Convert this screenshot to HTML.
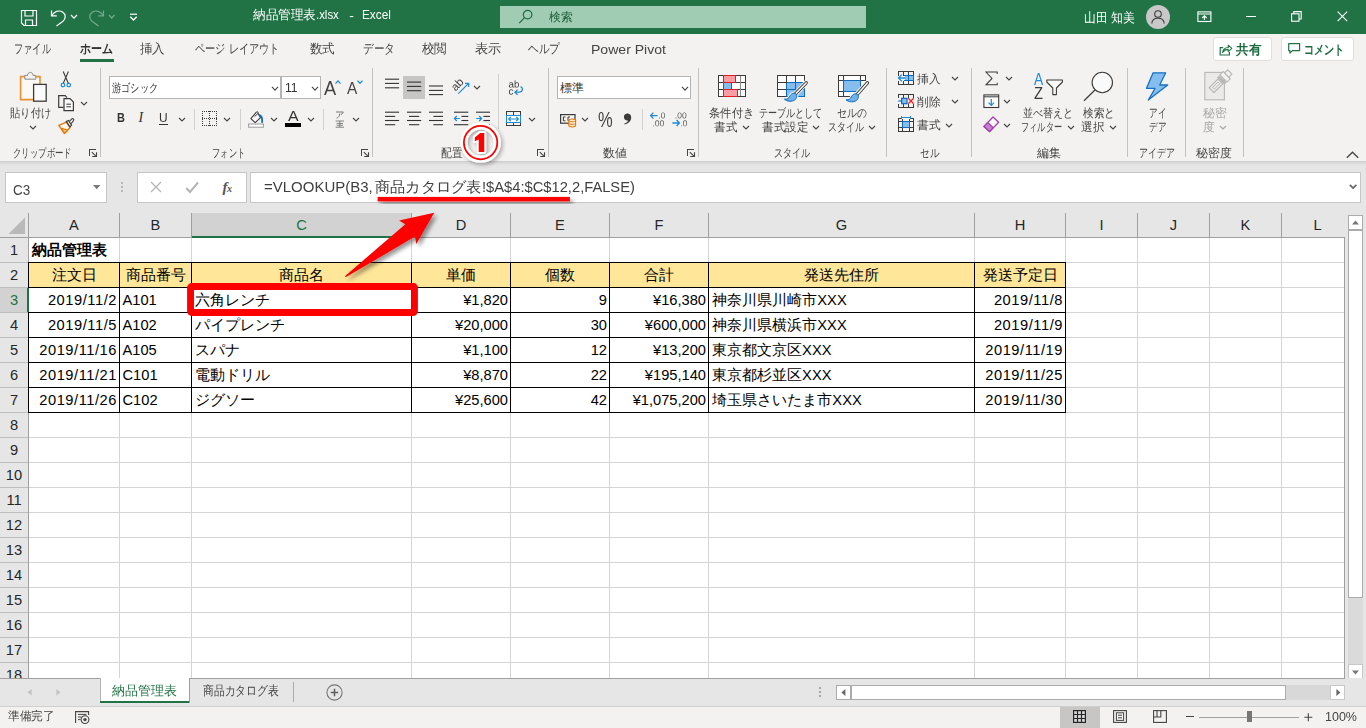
<!DOCTYPE html>
<html lang="ja"><head><meta charset="utf-8"><title>納品管理表.xlsx - Excel</title>
<style>
html,body{margin:0;padding:0;}
body{width:1366px;height:728px;overflow:hidden;position:relative;background:#e6e6e6;font-family:"Liberation Sans",sans-serif;}
div,span.t,svg{position:absolute;box-sizing:border-box;}
span.t{white-space:nowrap;display:block;}
svg{overflow:visible;}
.c{font-size:14.67px;line-height:24px;height:24px;color:#000;white-space:nowrap;position:absolute;overflow:hidden;}
</style></head><body>

<div style="left:0px;top:0px;width:1366px;height:34px;background:#217346;"></div>
<svg style="left:20px;top:9px;" width="18" height="18" viewBox="0 0 18 18"><path d="M1.5 1.5 H16.5 V16.5 H4 L1.5 14 Z" fill="none" stroke="#fff" stroke-width="1.2"/><path d="M5 1.5 V7 H13 V1.5 M5.5 16.5 V11 H12.5 V16.5" fill="none" stroke="#fff" stroke-width="1.2"/></svg>
<svg style="left:50px;top:9px;" width="17" height="18" viewBox="0 0 17 18"><path d="M1.5 1.5 V6.8 H6.8" fill="none" stroke="#fff" stroke-width="1.2"/><path d="M1.8 6.5 C4 2.5 9 0.8 12.5 3 C16 5.2 16 9.5 13 12.2 L6.5 17" fill="none" stroke="#fff" stroke-width="1.2"/></svg>
<svg style="left:69.6px;top:13.8px;" width="8" height="5.2" viewBox="0 0 8 5.2"><path d="M1 1 L4.0 4.2 L7 1" fill="none" stroke="#fff" stroke-width="1.2"/></svg>
<svg style="left:88px;top:9px;opacity:.38;" width="17" height="18" viewBox="0 0 17 18"><path d="M15.5 1.5 V6.8 H10.2" fill="none" stroke="#fff" stroke-width="1.2"/><path d="M15.2 6.5 C13 2.5 8 0.8 4.5 3 C1 5.2 1 9.5 4 12.2 L10.5 17" fill="none" stroke="#fff" stroke-width="1.2"/></svg>
<svg style="left:108px;top:13.8px;" width="7.6" height="5" viewBox="0 0 7.6 5"><path d="M1 1 L3.8 4 L6.6 1" fill="none" stroke="rgba(255,255,255,.38)" stroke-width="1.2"/></svg>
<svg style="left:129px;top:13px;" width="9" height="8" viewBox="0 0 9 8"><path d="M1 1.2 H8" stroke="#fff" stroke-width="1.2"/><path d="M1.3 3.8 L4.5 7 L7.7 3.8" fill="none" stroke="#fff" stroke-width="1.3"/></svg>
<span class="t" style="font-size:13.33px;color:#fff;line-height:16px;height:16px;top:7.20px;left:252.50px;transform-origin:0 50%;transform:scaleX(0.9677);">納品管理表</span>
<span class="t" style="font-size:12.8px;color:#fff;line-height:16px;height:16px;top:7.40px;left:316.40px;transform-origin:0 50%;transform:scaleX(0.8903);">.xlsx</span>
<span class="t" style="font-size:13.33px;color:#fff;line-height:16px;height:16px;top:7.60px;left:349.20px;">-</span>
<span class="t" style="font-size:12.8px;color:#fff;line-height:16px;height:16px;top:7.40px;left:361.50px;transform-origin:0 50%;transform:scaleX(0.9202);">Excel</span>
<div style="left:500px;top:6px;width:366px;height:22px;background:#a0ccb3;"></div>
<svg style="left:518px;top:9px;" width="16" height="16" viewBox="0 0 16 16"><circle cx="9.6" cy="5.6" r="4.3" fill="none" stroke="#1e6b40" stroke-width="1.2"/><path d="M6.6 8.7 L1.2 14.2" stroke="#1e6b40" stroke-width="1.2"/></svg>
<span class="t" style="font-size:12px;color:#1b5e38;line-height:16px;height:16px;top:9.00px;left:549.00px;transform-origin:0 50%;transform:scaleX(0.9792);">検索</span>
<span class="t" style="font-size:13.33px;color:#fff;line-height:16px;height:16px;top:9.90px;left:1083.80px;transform-origin:0 50%;transform:scaleX(0.9120);">山田 知美</span>
<svg style="left:1145px;top:4px;" width="26" height="26" viewBox="0 0 26 26"><circle cx="13" cy="13" r="12" fill="#c8c8c8"/><circle cx="13" cy="10" r="3.3" fill="none" stroke="#3b3b3b" stroke-width="1.1"/><path d="M6.8 19.5 C7 15 10 14.2 13 14.2 C16 14.2 19 15 19.2 19.5" fill="none" stroke="#3b3b3b" stroke-width="1.1"/></svg>
<svg style="left:1197px;top:10.5px;" width="15" height="12" viewBox="0 0 15 12"><rect x="0.9" y="0.9" width="13" height="9.6" fill="none" stroke="#fff" stroke-width="1.1"/><path d="M0.9 3 H13.9" stroke="#fff" stroke-width="1"/><path d="M7.4 9 V4.8 M5.1 7 L7.4 4.7 L9.7 7" fill="none" stroke="#fff" stroke-width="1.1"/></svg>
<div style="left:1246px;top:16px;width:10px;height:1px;background:#fff;height:1.2px;"></div>
<svg style="left:1291px;top:11px;" width="11" height="11" viewBox="0 0 11 11"><rect x="0.6" y="2.8" width="7.4" height="7.4" fill="none" stroke="#fff" stroke-width="1.1"/><path d="M2.8 2.8 V0.6 H10.2 V8 H8" fill="none" stroke="#fff" stroke-width="1.1"/></svg>
<svg style="left:1337px;top:11px;" width="11" height="11" viewBox="0 0 11 11"><path d="M0.6 0.6 L10.2 10.2 M10.2 0.6 L0.6 10.2" stroke="#fff" stroke-width="1.1"/></svg>
<div style="left:0px;top:34px;width:1366px;height:128px;background:#f3f2f1;"></div>
<span class="t" style="font-size:13.33px;color:#444;line-height:16px;height:16px;top:41.00px;left:13.80px;transform-origin:0 50%;transform:scaleX(0.7115);">ファイル</span>
<span class="t" style="font-size:13.33px;color:#333;line-height:16px;height:16px;top:41.00px;font-weight:bold;left:80.00px;transform-origin:0 50%;transform:scaleX(0.8462);">ホーム</span>
<div style="left:80px;top:59px;width:34px;height:3px;background:#217346;"></div>
<span class="t" style="font-size:13.33px;color:#444;line-height:16px;height:16px;top:41.00px;left:140.00px;transform-origin:0 50%;transform:scaleX(0.9615);">挿入</span>
<span class="t" style="font-size:13.33px;color:#444;line-height:16px;height:16px;top:41.00px;left:195.00px;transform-origin:0 50%;transform:scaleX(0.7846);">ページ レイアウト</span>
<span class="t" style="font-size:13.33px;color:#444;line-height:16px;height:16px;top:41.00px;left:310.00px;transform-origin:0 50%;transform:scaleX(0.9615);">数式</span>
<span class="t" style="font-size:13.33px;color:#444;line-height:16px;height:16px;top:41.00px;left:362.50px;transform-origin:0 50%;transform:scaleX(0.8205);">データ</span>
<span class="t" style="font-size:13.33px;color:#444;line-height:16px;height:16px;top:41.00px;left:422.00px;transform-origin:0 50%;transform:scaleX(0.9615);">校閲</span>
<span class="t" style="font-size:13.33px;color:#444;line-height:16px;height:16px;top:41.00px;left:474.50px;transform-origin:0 50%;transform:scaleX(1.0115);">表示</span>
<span class="t" style="font-size:13.33px;color:#444;line-height:16px;height:16px;top:41.00px;left:527.50px;transform-origin:0 50%;transform:scaleX(0.8205);">ヘルプ</span>
<span class="t" style="font-size:13.33px;color:#444;line-height:16px;height:16px;top:41.60px;left:590.80px;transform-origin:0 50%;transform:scaleX(1.0545);">Power Pivot</span>
<div style="left:1212.5px;top:37px;width:59px;height:23.5px;background:#fff;border:1px solid #e1dfdd;border-radius:3px;"></div>
<svg style="left:1219px;top:43px;" width="14" height="13" viewBox="0 0 14 13"><path d="M4.2 4.6 H1.2 V12 H10.4 V9" fill="none" stroke="#217346" stroke-width="1.2"/><path d="M3.6 9.4 C4 6.4 6 4.6 9.2 4.5 V2.2 L12.8 5.4 L9.2 8.6 V6.4 C6.8 6.4 5 7.2 3.6 9.4 Z" fill="none" stroke="#217346" stroke-width="1.1" stroke-linejoin="round"/></svg>
<span class="t" style="font-size:13.33px;color:#1e6b40;line-height:16px;height:16px;top:41.80px;font-weight:bold;left:1236.20px;transform-origin:0 50%;transform:scaleX(0.9654);">共有</span>
<div style="left:1280.5px;top:37px;width:73px;height:23.5px;background:#fff;border:1px solid #e1dfdd;border-radius:3px;"></div>
<svg style="left:1288px;top:43px;" width="13" height="12" viewBox="0 0 13 12"><path d="M0.7 0.7 H11.6 V7.6 H4.4 L1.9 10.1 V7.6 H0.7 Z" fill="none" stroke="#217346" stroke-width="1.2" stroke-linejoin="round"/></svg>
<span class="t" style="font-size:13.33px;color:#1e6b40;line-height:16px;height:16px;top:41.80px;font-weight:bold;left:1303.50px;transform-origin:0 50%;transform:scaleX(0.7788);">コメント</span>
<div style="left:0px;top:161px;width:1366px;height:5px;background:linear-gradient(#cecece,#d9d9d9 35%,#e2e2e2 70%,#e6e6e6);"></div>
<div style="left:100.1px;top:68px;width:1px;height:88.5px;background:#c4c2c0;"></div>
<div style="left:372.2px;top:68px;width:1px;height:88.5px;background:#c4c2c0;"></div>
<div style="left:547.9px;top:68px;width:1px;height:88.5px;background:#c4c2c0;"></div>
<div style="left:698.1px;top:68px;width:1px;height:88.5px;background:#c4c2c0;"></div>
<div style="left:885.9px;top:68px;width:1px;height:88.5px;background:#c4c2c0;"></div>
<div style="left:970.9px;top:68px;width:1px;height:88.5px;background:#c4c2c0;"></div>
<div style="left:1126.9px;top:68px;width:1px;height:88.5px;background:#c4c2c0;"></div>
<div style="left:1185.1px;top:68px;width:1px;height:88.5px;background:#c4c2c0;"></div>
<div style="left:1242.9px;top:68px;width:1px;height:88.5px;background:#c4c2c0;"></div>
<div style="left:194.1px;top:109px;width:1px;height:21px;background:#d2d0ce;"></div>
<div style="left:240.0px;top:109px;width:1px;height:21px;background:#d2d0ce;"></div>
<div style="left:323.2px;top:109px;width:1px;height:21px;background:#d2d0ce;"></div>
<div style="left:642.1px;top:109px;width:1px;height:21px;background:#d2d0ce;"></div>
<div style="left:498.1px;top:74px;width:1px;height:55px;background:#d2d0ce;"></div>
<svg style="left:19px;top:71px;" width="29" height="32" viewBox="0 0 29 32"><rect x="1.6" y="5.6" width="19.4" height="23" fill="#fcf9f4"/><path d="M6 5.6 H1.6 V28.6 H14" fill="none" stroke="#e8912d" stroke-width="1.6"/><path d="M16.6 5.6 H21 V13" fill="none" stroke="#e8912d" stroke-width="1.6"/><path d="M5.8 8.2 V4.4 H8.6 C8.6 0.4 14 0.4 14 4.4 H16.8 V8.2 Z" fill="#f3f2f1" stroke="#8a8a8a" stroke-width="1"/><rect x="14.6" y="13.4" width="12.6" height="16.8" fill="#fafafa" stroke="#3b3b3b" stroke-width="1.3"/></svg>
<span class="t" style="font-size:12px;color:#444;line-height:16px;height:16px;top:104.60px;left:10.30px;transform-origin:0 50%;transform:scaleX(0.8583);">貼り付け</span>
<svg style="left:28.7px;top:125px;" width="8" height="5" viewBox="0 0 8 5"><path d="M1 1 L4.0 4 L7 1" fill="none" stroke="#444" stroke-width="1.1"/></svg>
<svg style="left:60px;top:71px;" width="12" height="17" viewBox="0 0 12 17"><path d="M3.2 0.5 L8.3 12.2 M8.4 0.5 L3.3 12.2" fill="none" stroke="#3b3b3b" stroke-width="1.1"/><rect x="1.3" y="12.3" width="3.3" height="3.4" rx="1.2" fill="none" stroke="#1e8ad6" stroke-width="1.2"/><rect x="7.1" y="12.3" width="3.3" height="3.4" rx="1.2" fill="none" stroke="#1e8ad6" stroke-width="1.2"/></svg>
<svg style="left:58px;top:95px;" width="17" height="17" viewBox="0 0 17 17"><path d="M5.4 12.4 H0.7 V0.7 H7.2 L9 2.6" fill="none" stroke="#3b3b3b" stroke-width="1.2"/><path d="M6 3.6 H12 L15.4 7 V15.6 H6 Z" fill="#fafafa" stroke="#3b3b3b" stroke-width="1.2"/><path d="M8.4 9.2 H13 M8.4 11.8 H13" stroke="#3b3b3b" stroke-width="1"/></svg>
<svg style="left:79.5px;top:101px;" width="8" height="5" viewBox="0 0 8 5"><path d="M1 1 L4.0 4 L7 1" fill="none" stroke="#444" stroke-width="1.1"/></svg>
<svg style="left:58px;top:118px;" width="17" height="17" viewBox="0 0 17 17"><path d="M0.8 7.4 L8.6 4.2 L12.2 9.6 L6.4 15.4 Z" fill="#fdf6ec" stroke="#e07a10" stroke-width="1.4" stroke-linejoin="round"/><path d="M3.4 10.4 L9.8 12 L6.4 15.4 Z" fill="#f7c46c" stroke="#e07a10" stroke-width="1.1" stroke-linejoin="round"/><path d="M8.2 3.4 L10.4 2.4 L13.6 7.2 L11.8 8.8 Z" fill="none" stroke="#3b3b3b" stroke-width="1.1"/><path d="M11.4 3.4 L13.8 0.9 C14.8 0 16.4 1.4 15.6 2.5 L13.2 5.6" fill="none" stroke="#3b3b3b" stroke-width="1.1"/></svg>
<span class="t" style="font-size:12px;color:#444;line-height:16px;height:16px;top:145.00px;left:12.50px;transform-origin:0 50%;transform:scaleX(0.6988);">クリップボード</span>
<svg style="left:89px;top:149px;" width="9" height="9" viewBox="0 0 9 9"><path d="M0.5 7 V0.5 H7" fill="none" stroke="#444" stroke-width="1" shape-rendering="crispEdges"/><path d="M2.8 3.1 L7.2 7.3" fill="none" stroke="#444" stroke-width="1.1"/><path d="M7.5 3.2 V7.5 H3.2" fill="none" stroke="#444" stroke-width="1.1"/></svg>
<div style="left:109px;top:76px;width:172px;height:23px;background:#fff;border:1px solid #b4b4b4;"></div>
<div style="left:281px;top:76px;width:40px;height:23px;background:#fff;border:1px solid #b4b4b4;"></div>
<span class="t" style="font-size:12px;color:#333;line-height:16px;height:16px;top:79.60px;left:111.90px;transform-origin:0 50%;transform:scaleX(0.7683);">游ゴシック</span>
<svg style="left:270.6px;top:85.9px;" width="8" height="5.2" viewBox="0 0 8 5.2"><path d="M1 1 L4.0 4.2 L7 1" fill="none" stroke="#444" stroke-width="1.1"/></svg>
<span class="t" style="font-size:12px;color:#333;line-height:16px;height:16px;top:79.80px;left:284.70px;transform-origin:0 50%;transform:scaleX(1.0105);">11</span>
<svg style="left:310.5px;top:85.9px;" width="8" height="5.2" viewBox="0 0 8 5.2"><path d="M1 1 L4.0 4.2 L7 1" fill="none" stroke="#444" stroke-width="1.1"/></svg>
<span class="t" style="font-size:20px;color:#444;line-height:22px;height:22px;top:77.00px;left:324.00px;transform-origin:0 50%;transform:scaleX(0.9143);">A</span>
<svg style="left:334.6px;top:79.6px;" width="6" height="4" viewBox="0 0 6 4"><path d="M0.5 3.6 L3 0.9 L5.5 3.6" fill="none" stroke="#1e8ad6" stroke-width="1.3"/></svg>
<span class="t" style="font-size:16.6px;color:#444;line-height:20px;height:20px;top:79.20px;left:347.00px;transform-origin:0 50%;transform:scaleX(0.9298);">A</span>
<svg style="left:356.8px;top:79.6px;" width="6" height="4" viewBox="0 0 6 4"><path d="M0.5 0.6 L3 3.3 L5.5 0.6" fill="none" stroke="#1e8ad6" stroke-width="1.3"/></svg>
<span class="t" style="font-size:13.4px;color:#333;line-height:16px;height:16px;top:110.40px;font-weight:bold;left:116.50px;transform-origin:0 50%;transform:scaleX(0.8168);">B</span>
<span class="t" style="left:138.6px;top:110.2px;font-family:'Liberation Serif',serif;font-style:italic;font-size:14px;line-height:16px;color:#333;">I</span>
<span class="t" style="font-size:13px;color:#333;line-height:16px;height:16px;top:109.60px;left:159.40px;transform-origin:0 50%;transform:scaleX(0.9158);">U</span>
<div style="left:159.2px;top:123.9px;width:9px;height:1.1px;background:#333;"></div>
<svg style="left:177.5px;top:116.8px;" width="8" height="5" viewBox="0 0 8 5"><path d="M1 1 L4.0 4 L7 1" fill="none" stroke="#444" stroke-width="1.1"/></svg>
<svg style="left:202px;top:111px;" width="16" height="16" viewBox="0 0 16 16"><g shape-rendering="crispEdges"><path d="M0.5 0 V15 M7.5 0 V15 M14.5 0 V15 M0 0.5 H15 M0 7.5 H15 M0 14.5 H15" fill="none" stroke="#3b3b3b" stroke-width="1" stroke-dasharray="1 1"/></g></svg>
<svg style="left:223.4px;top:116.8px;" width="8" height="5" viewBox="0 0 8 5"><path d="M1 1 L4.0 4 L7 1" fill="none" stroke="#444" stroke-width="1.1"/></svg>
<svg style="left:248px;top:110.5px;" width="16" height="17" viewBox="0 0 16 17"><path d="M8.6 0.9 L2.9 7.6 L7.2 11.6 L12.5 6.6 L10 2.4" fill="#fafafa" stroke="#3b3b3b" stroke-width="1.1" stroke-linejoin="round"/><path d="M8.6 0.9 C9.6 0.3 10.6 1.2 10 2.4 L6.6 5.6" fill="none" stroke="#3b3b3b" stroke-width="1"/><path d="M11.6 4.2 C13.6 4.8 14.4 7 14.1 11" fill="none" stroke="#1470c6" stroke-width="1.9" stroke-linecap="round"/><rect x="0.6" y="13" width="14.8" height="3.2" fill="#fff" stroke="#9a9a9a" stroke-width="1"/></svg>
<svg style="left:269.6px;top:116.8px;" width="8" height="5" viewBox="0 0 8 5"><path d="M1 1 L4.0 4 L7 1" fill="none" stroke="#444" stroke-width="1.1"/></svg>
<span class="t" style="font-size:14.6px;color:#333;line-height:16px;height:16px;top:108.20px;left:288.00px;transform-origin:0 50%;transform:scaleX(1.0889);">A</span>
<div style="left:285px;top:123px;width:16px;height:4px;background:#000;"></div>
<svg style="left:306.6px;top:116.8px;" width="8" height="5" viewBox="0 0 8 5"><path d="M1 1 L4.0 4 L7 1" fill="none" stroke="#444" stroke-width="1.1"/></svg>
<svg style="left:334.5px;top:110.5px;" width="10" height="17" viewBox="0 0 10 17"><path d="M1 1 H8.4 L6 4 M4.6 2.6 C4.6 5 3.6 6.4 1.6 7.2" fill="none" stroke="#777" stroke-width="1"/><path d="M0.6 10 H9 M1.6 12.4 H8 M1.6 14.2 H8 M0.6 16.2 H9 M4.8 10 V16.2" fill="none" stroke="#777" stroke-width="0.9"/></svg>
<svg style="left:352.4px;top:116.8px;" width="8" height="5" viewBox="0 0 8 5"><path d="M1 1 L4.0 4 L7 1" fill="none" stroke="#444" stroke-width="1.1"/></svg>
<span class="t" style="font-size:12px;color:#444;line-height:16px;height:16px;top:145.00px;left:212.00px;transform-origin:0 50%;transform:scaleX(0.6875);">フォント</span>
<svg style="left:361px;top:149px;" width="9" height="9" viewBox="0 0 9 9"><path d="M0.5 7 V0.5 H7" fill="none" stroke="#444" stroke-width="1" shape-rendering="crispEdges"/><path d="M2.8 3.1 L7.2 7.3" fill="none" stroke="#444" stroke-width="1.1"/><path d="M7.5 3.2 V7.5 H3.2" fill="none" stroke="#444" stroke-width="1.1"/></svg>
<div style="left:403px;top:76px;width:22px;height:23px;background:#c8c6c4;"></div>
<svg style="left:384.9px;top:76px;" width="15" height="23" viewBox="0 0 15 23"><path d="M0 3.2 H14.1" stroke="#333" stroke-width="1.1"/><path d="M0 7.4 H14.1" stroke="#333" stroke-width="1.1"/><path d="M0 11.8 H14.1" stroke="#333" stroke-width="1.1"/></svg>
<svg style="left:407px;top:76px;" width="15" height="23" viewBox="0 0 15 23"><path d="M0 6.1 H14.2" stroke="#333" stroke-width="1.1"/><path d="M0 10.4 H14.2" stroke="#333" stroke-width="1.1"/><path d="M0 14.7 H14.2" stroke="#333" stroke-width="1.1"/></svg>
<svg style="left:429px;top:76px;" width="15" height="23" viewBox="0 0 15 23"><path d="M0 10 H14" stroke="#333" stroke-width="1.1"/><path d="M0 14.4 H14" stroke="#333" stroke-width="1.1"/><path d="M0 18.6 H14" stroke="#333" stroke-width="1.1"/></svg>
<svg style="left:452px;top:78px;" width="18" height="17" viewBox="0 0 18 17"><path transform="translate(3.7 13.7) rotate(-47) scale(0.00557 -0.00557)" d="M414 -20Q251 -20 169 66Q87 152 87 302Q87 470 198 560Q308 650 554 656L797 660V719Q797 851 741 908Q685 965 565 965Q444 965 389 924Q334 883 323 793L135 810Q181 1102 569 1102Q773 1102 876 1008Q979 915 979 738V272Q979 192 1000 152Q1021 111 1080 111Q1106 111 1139 118V6Q1071 -10 1000 -10Q900 -10 854 42Q809 95 803 207H797Q728 83 636 32Q545 -20 414 -20ZM455 115Q554 115 631 160Q708 205 752 284Q797 362 797 445V534L600 530Q473 528 408 504Q342 480 307 430Q272 380 272 299Q272 211 320 163Q367 115 455 115ZM2192 546Q2192 -20 1794 -20Q1671 -20 1590 24Q1508 69 1457 168H1455Q1455 137 1451 74Q1447 10 1445 0H1271Q1277 54 1277 223V1484H1457V1061Q1457 996 1453 908H1457Q1507 1012 1590 1057Q1672 1102 1794 1102Q1999 1102 2096 964Q2192 826 2192 546ZM2003 540Q2003 767 1943 865Q1883 963 1748 963Q1596 963 1526 859Q1457 755 1457 529Q1457 316 1525 214Q1593 113 1746 113Q1882 113 1942 214Q2003 314 2003 540Z" fill="#3b3b3b"/><path d="M6.3 15.6 L16.6 5.4 M13 5.3 H16.7 V9" fill="none" stroke="#1e8ad6" stroke-width="1.25"/></svg>
<svg style="left:472.6px;top:84.9px;" width="8" height="5" viewBox="0 0 8 5"><path d="M1 1 L4.0 4 L7 1" fill="none" stroke="#444" stroke-width="1.1"/></svg>
<svg style="left:384.9px;top:111px;" width="15" height="15" viewBox="0 0 15 15"><path d="M0 1.2 H14.1" stroke="#333" stroke-width="1.1"/><path d="M0 5.4 H10.2" stroke="#333" stroke-width="1.1"/><path d="M0 9.5 H14.1" stroke="#333" stroke-width="1.1"/><path d="M0 13.7 H10.2" stroke="#333" stroke-width="1.1"/></svg>
<svg style="left:407px;top:111px;" width="15" height="15" viewBox="0 0 15 15"><path d="M0 1.2 H14.2" stroke="#333" stroke-width="1.1"/><path d="M2 5.4 H12.2" stroke="#333" stroke-width="1.1"/><path d="M0 9.5 H14.2" stroke="#333" stroke-width="1.1"/><path d="M2 13.7 H12.2" stroke="#333" stroke-width="1.1"/></svg>
<svg style="left:429px;top:111px;" width="15" height="15" viewBox="0 0 15 15"><path d="M0 1.2 H14" stroke="#333" stroke-width="1.1"/><path d="M4.4 5.4 H14" stroke="#333" stroke-width="1.1"/><path d="M0 9.5 H14" stroke="#333" stroke-width="1.1"/><path d="M4.4 13.7 H14" stroke="#333" stroke-width="1.1"/></svg>
<svg style="left:454px;top:111px;" width="15" height="15" viewBox="0 0 15 15"><path d="M0 1.2 H14.3" stroke="#333" stroke-width="1.1"/><path d="M7.4 5.4 H14.3" stroke="#333" stroke-width="1.1"/><path d="M7.4 9.5 H14.3" stroke="#333" stroke-width="1.1"/><path d="M0 13.7 H14.3" stroke="#333" stroke-width="1.1"/><path d="M0.4 7.5 H5.8 M2.8 5 L0.4 7.5 L2.8 10" fill="none" stroke="#1e8ad6" stroke-width="1.2"/></svg>
<svg style="left:476px;top:111px;" width="15" height="15" viewBox="0 0 15 15"><path d="M0 1.2 H14" stroke="#333" stroke-width="1.1"/><path d="M7.4 5.4 H14" stroke="#333" stroke-width="1.1"/><path d="M7.4 9.5 H14" stroke="#333" stroke-width="1.1"/><path d="M0 13.7 H14" stroke="#333" stroke-width="1.1"/><path d="M0.2 7.5 H5.6 M3.2 5 L5.6 7.5 L3.2 10" fill="none" stroke="#1e8ad6" stroke-width="1.2"/></svg>
<svg style="left:507.5px;top:79.5px;" width="16" height="16" viewBox="0 0 16 16"><path transform="translate(0.5 7.5) scale(0.00479 -0.00479)" d="M414 -20Q251 -20 169 66Q87 152 87 302Q87 470 198 560Q308 650 554 656L797 660V719Q797 851 741 908Q685 965 565 965Q444 965 389 924Q334 883 323 793L135 810Q181 1102 569 1102Q773 1102 876 1008Q979 915 979 738V272Q979 192 1000 152Q1021 111 1080 111Q1106 111 1139 118V6Q1071 -10 1000 -10Q900 -10 854 42Q809 95 803 207H797Q728 83 636 32Q545 -20 414 -20ZM455 115Q554 115 631 160Q708 205 752 284Q797 362 797 445V534L600 530Q473 528 408 504Q342 480 307 430Q272 380 272 299Q272 211 320 163Q367 115 455 115ZM2192 546Q2192 -20 1794 -20Q1671 -20 1590 24Q1508 69 1457 168H1455Q1455 137 1451 74Q1447 10 1445 0H1271Q1277 54 1277 223V1484H1457V1061Q1457 996 1453 908H1457Q1507 1012 1590 1057Q1672 1102 1794 1102Q1999 1102 2096 964Q2192 826 2192 546ZM2003 540Q2003 767 1943 865Q1883 963 1748 963Q1596 963 1526 859Q1457 755 1457 529Q1457 316 1525 214Q1593 113 1746 113Q1882 113 1942 214Q2003 314 2003 540Z" fill="#3b3b3b"/><path transform="translate(0.5 14.6) scale(0.00479 -0.00479)" d="M275 546Q275 330 343 226Q411 122 548 122Q644 122 708 174Q773 226 788 334L970 322Q949 166 837 73Q725 -20 553 -20Q326 -20 206 124Q87 267 87 542Q87 815 207 958Q327 1102 551 1102Q717 1102 826 1016Q936 930 964 779L779 765Q765 855 708 908Q651 961 546 961Q403 961 339 866Q275 771 275 546Z" fill="#3b3b3b"/><path d="M12.6 6.6 C15.6 8 14.6 12.4 11.4 12.2 H7 M9.6 9.6 L6.8 12.2 L9.6 14.8" fill="none" stroke="#1e8ad6" stroke-width="1.2"/></svg>
<svg style="left:506px;top:111px;" width="15" height="15" viewBox="0 0 15 15"><g shape-rendering="crispEdges"><path d="M0.5 4 V0.5 H14.5 V4 M7.5 0.5 V4 M0.5 11 V14.5 H14.5 V11 M7.5 14.5 V11" fill="none" stroke="#3b3b3b" stroke-width="1"/><rect x="0.5" y="4.5" width="14" height="7" fill="#fff" stroke="#1e8ad6" stroke-width="1"/></g><path d="M2.6 8 H12.4 M4.8 5.9 L2.6 8 L4.8 10.1 M10.2 5.9 L12.4 8 L10.2 10.1" fill="none" stroke="#1e8ad6" stroke-width="1.1"/></svg>
<svg style="left:527.5px;top:116.8px;" width="8" height="5" viewBox="0 0 8 5"><path d="M1 1 L4.0 4 L7 1" fill="none" stroke="#444" stroke-width="1.1"/></svg>
<span class="t" style="font-size:12px;color:#444;line-height:16px;height:16px;top:145.00px;left:440.60px;transform-origin:0 50%;transform:scaleX(0.9042);">配置</span>
<svg style="left:537px;top:149px;" width="9" height="9" viewBox="0 0 9 9"><path d="M0.5 7 V0.5 H7" fill="none" stroke="#444" stroke-width="1" shape-rendering="crispEdges"/><path d="M2.8 3.1 L7.2 7.3" fill="none" stroke="#444" stroke-width="1.1"/><path d="M7.5 3.2 V7.5 H3.2" fill="none" stroke="#444" stroke-width="1.1"/></svg>
<div style="left:557px;top:76px;width:134px;height:23px;background:#fff;border:1px solid #b4b4b4;"></div>
<span class="t" style="font-size:12px;color:#333;line-height:16px;height:16px;top:79.60px;left:560.00px;transform-origin:0 50%;transform:scaleX(1.0000);">標準</span>
<svg style="left:680.5px;top:85.9px;" width="8" height="5.2" viewBox="0 0 8 5.2"><path d="M1 1 L4.0 4.2 L7 1" fill="none" stroke="#444" stroke-width="1.1"/></svg>
<svg style="left:560px;top:113.5px;" width="17" height="14" viewBox="0 0 17 14"><rect x="0.6" y="0.6" width="14.4" height="8.6" fill="none" stroke="#3b3b3b" stroke-width="1.2"/><path d="M5.4 3 H3.4 V6.8 H5.4 M10 3 H8 V6.8 H10" fill="none" stroke="#3b3b3b" stroke-width="1"/><path d="M8.8 6.4 C8.8 4.6 15.6 4.6 15.6 6.4 V11.6 C15.6 13.4 8.8 13.4 8.8 11.6 Z" fill="#fdebd2" stroke="#e07a10" stroke-width="1.1"/><path d="M8.8 6.6 C8.8 8.2 15.6 8.2 15.6 6.6 M8.8 9.2 C8.8 10.8 15.6 10.8 15.6 9.2" fill="none" stroke="#e07a10" stroke-width="1"/></svg>
<svg style="left:581.3px;top:116.8px;" width="8" height="5" viewBox="0 0 8 5"><path d="M1 1 L4.0 4 L7 1" fill="none" stroke="#444" stroke-width="1.1"/></svg>
<span class="t" style="font-size:21.4px;color:#444;line-height:24px;height:24px;top:107.70px;left:597.50px;transform-origin:0 50%;transform:scaleX(0.7724);">%</span>
<svg style="left:623px;top:113px;" width="9" height="12" viewBox="0 0 9 12"><path d="M4.4 0.6 C6.6 0.6 8.2 2.2 8.2 4.6 C8.2 8 5.4 10.6 1.6 11.6 L1.2 10.8 C3.6 9.8 4.8 8.6 4.9 7.4 C2.4 7.6 0.9 6 0.9 4 C0.9 2 2.4 0.6 4.4 0.6 Z" fill="#3b3b3b"/></svg>
<svg style="left:649.5px;top:111px;" width="16" height="16" viewBox="0 0 16 16"><path d="M0.6 4.6 H7.6 M3.4 1.6 L0.6 4.6 L3.4 7.6" fill="none" stroke="#1e8ad6" stroke-width="1.3"/><path transform="translate(8.2 7.4) scale(0.00420 -0.00420)" d="M187 0V219H382V0ZM1628 705Q1628 352 1504 166Q1379 -20 1136 -20Q893 -20 771 165Q649 350 649 705Q649 1068 768 1249Q886 1430 1142 1430Q1391 1430 1510 1247Q1628 1064 1628 705ZM1445 705Q1445 1010 1374 1147Q1304 1284 1142 1284Q976 1284 904 1149Q831 1014 831 705Q831 405 904 266Q978 127 1138 127Q1297 127 1371 269Q1445 411 1445 705Z" fill="#5a5a5a"/><path transform="translate(2.4 15.3) scale(0.00420 -0.00420)" d="M187 0V219H382V0ZM1628 705Q1628 352 1504 166Q1379 -20 1136 -20Q893 -20 771 165Q649 350 649 705Q649 1068 768 1249Q886 1430 1142 1430Q1391 1430 1510 1247Q1628 1064 1628 705ZM1445 705Q1445 1010 1374 1147Q1304 1284 1142 1284Q976 1284 904 1149Q831 1014 831 705Q831 405 904 266Q978 127 1138 127Q1297 127 1371 269Q1445 411 1445 705ZM2767 705Q2767 352 2642 166Q2518 -20 2275 -20Q2032 -20 1910 165Q1788 350 1788 705Q1788 1068 1906 1249Q2025 1430 2281 1430Q2530 1430 2648 1247Q2767 1064 2767 705ZM2584 705Q2584 1010 2514 1147Q2443 1284 2281 1284Q2115 1284 2042 1149Q1970 1014 1970 705Q1970 405 2044 266Q2117 127 2277 127Q2436 127 2510 269Q2584 411 2584 705Z" fill="#5a5a5a"/></svg>
<svg style="left:671.5px;top:111px;" width="16" height="16" viewBox="0 0 16 16"><path transform="translate(2.8 7.4) scale(0.00420 -0.00420)" d="M187 0V219H382V0ZM1628 705Q1628 352 1504 166Q1379 -20 1136 -20Q893 -20 771 165Q649 350 649 705Q649 1068 768 1249Q886 1430 1142 1430Q1391 1430 1510 1247Q1628 1064 1628 705ZM1445 705Q1445 1010 1374 1147Q1304 1284 1142 1284Q976 1284 904 1149Q831 1014 831 705Q831 405 904 266Q978 127 1138 127Q1297 127 1371 269Q1445 411 1445 705ZM2767 705Q2767 352 2642 166Q2518 -20 2275 -20Q2032 -20 1910 165Q1788 350 1788 705Q1788 1068 1906 1249Q2025 1430 2281 1430Q2530 1430 2648 1247Q2767 1064 2767 705ZM2584 705Q2584 1010 2514 1147Q2443 1284 2281 1284Q2115 1284 2042 1149Q1970 1014 1970 705Q1970 405 2044 266Q2117 127 2277 127Q2436 127 2510 269Q2584 411 2584 705Z" fill="#5a5a5a"/><path d="M0.4 12 H7.4 M4.6 9 L7.4 12 L4.6 15" fill="none" stroke="#1e8ad6" stroke-width="1.3"/><path transform="translate(8.2 15.3) scale(0.00420 -0.00420)" d="M187 0V219H382V0ZM1628 705Q1628 352 1504 166Q1379 -20 1136 -20Q893 -20 771 165Q649 350 649 705Q649 1068 768 1249Q886 1430 1142 1430Q1391 1430 1510 1247Q1628 1064 1628 705ZM1445 705Q1445 1010 1374 1147Q1304 1284 1142 1284Q976 1284 904 1149Q831 1014 831 705Q831 405 904 266Q978 127 1138 127Q1297 127 1371 269Q1445 411 1445 705Z" fill="#5a5a5a"/></svg>
<span class="t" style="font-size:12px;color:#444;line-height:16px;height:16px;top:145.00px;left:603.00px;transform-origin:0 50%;transform:scaleX(1.0083);">数値</span>
<svg style="left:687px;top:149px;" width="9" height="9" viewBox="0 0 9 9"><path d="M0.5 7 V0.5 H7" fill="none" stroke="#444" stroke-width="1" shape-rendering="crispEdges"/><path d="M2.8 3.1 L7.2 7.3" fill="none" stroke="#444" stroke-width="1.1"/><path d="M7.5 3.2 V7.5 H3.2" fill="none" stroke="#444" stroke-width="1.1"/></svg>
<svg style="left:718px;top:75px;" width="28" height="22" viewBox="0 0 28 22"><g shape-rendering="crispEdges"><rect x="0.5" y="0.5" width="27" height="21" fill="#fcfcfc" stroke="#3b3b3b"/><path d="M0.5 7.5 H27.5 M0.5 14.5 H27.5" stroke="#3b3b3b"/><path d="M22.5 1 V21" stroke="#8a8a8a"/><rect x="5.5" y="0.5" width="12" height="7" fill="#f99ca3" stroke="#da1e24"/><rect x="5.5" y="14.5" width="14" height="7" fill="#f99ca3" stroke="#da1e24"/><rect x="5.5" y="8" width="8" height="6" fill="#84bdee"/><path d="M5.5 8 V14 M13.5 8 V14" stroke="#0f6cbd"/></g></svg>
<span class="t" style="font-size:12px;color:#444;line-height:16px;height:16px;top:104.60px;left:708.90px;transform-origin:0 50%;transform:scaleX(0.9396);">条件付き</span>
<span class="t" style="font-size:12px;color:#444;line-height:16px;height:16px;top:119.20px;left:714.40px;transform-origin:0 50%;transform:scaleX(0.9625);">書式</span>
<svg style="left:741.8px;top:125px;" width="8" height="5" viewBox="0 0 8 5"><path d="M1 1 L4.0 4 L7 1" fill="none" stroke="#444" stroke-width="1.1"/></svg>
<svg style="left:777px;top:75px;" width="32" height="28" viewBox="0 0 32 28"><g shape-rendering="crispEdges"><rect x="0.5" y="0.5" width="27" height="21" fill="#fcfcfc" stroke="#3b3b3b"/><rect x="9.5" y="7.5" width="18" height="14" fill="#84bdee"/><path d="M9.5 0.5 V21.5 M18.5 0.5 V7.5 M0.5 7.5 H27.5 M0.5 14.5 H9.5" stroke="#3b3b3b"/><path d="M9.5 7.5 V21.5 M18.5 7.5 V21.5 M27.5 7.5 V21.5 M9.5 7.5 H27.5 M9.5 14.5 H27.5 M9.5 21.5 H27.5" stroke="#0f6cbd"/></g><path d="M18.8 18.8 C20.8 20.599999999999998 19.599999999999998 25.2 15.2 26.0 C12.2 26.6 9.6 26.0 7.399999999999999 24.2 C10.6 24.6 11.799999999999999 23.2 12.799999999999999 21.2 C13.799999999999999 19.0 16.599999999999998 17.2 18.8 18.8 Z" fill="#f3f2f1" stroke="#f3f2f1" stroke-width="3"/><path d="M29.2 7.8 L18.2 19.2" stroke="#f3f2f1" stroke-width="5.2" stroke-linecap="round"/><path d="M29.2 7.8 L18.2 19.2" stroke="#3b3b3b" stroke-width="3.3" stroke-linecap="round"/><path d="M29.099999999999998 7.8999999999999995 L18.599999999999998 18.8" stroke="#fcfcfc" stroke-width="1.5" stroke-linecap="round"/><path d="M18.8 18.8 C20.8 20.599999999999998 19.599999999999998 25.2 15.2 26.0 C12.2 26.6 9.6 26.0 7.399999999999999 24.2 C10.6 24.6 11.799999999999999 23.2 12.799999999999999 21.2 C13.799999999999999 19.0 16.599999999999998 17.2 18.8 18.8 Z" fill="#6fb1ea" stroke="#0f6cbd" stroke-width="1" stroke-linejoin="round"/></svg>
<span class="t" style="font-size:12px;color:#444;line-height:16px;height:16px;top:104.60px;left:759.20px;transform-origin:0 50%;transform:scaleX(0.7548);">テーブルとして</span>
<span class="t" style="font-size:12px;color:#444;line-height:16px;height:16px;top:119.20px;left:761.60px;transform-origin:0 50%;transform:scaleX(0.9667);">書式設定</span>
<svg style="left:812.3px;top:125px;" width="8" height="5" viewBox="0 0 8 5"><path d="M1 1 L4.0 4 L7 1" fill="none" stroke="#444" stroke-width="1.1"/></svg>
<svg style="left:838px;top:75px;" width="32" height="28" viewBox="0 0 32 28"><g shape-rendering="crispEdges"><rect x="0.5" y="0.5" width="27" height="21" fill="#fcfcfc" stroke="#3b3b3b"/><path d="M5.5 0.5 V21.5 M22.5 0.5 V21.5 M0.5 5.5 H27.5 M0.5 16.5 H27.5" stroke="#3b3b3b"/><rect x="5.5" y="5.5" width="17" height="11" fill="#84bdee" stroke="#0f6cbd"/></g><path d="M31 6 V23 H17.6 L20.4 19.4 L30 8.4 Z" fill="#f3f2f1"/><path d="M19.400000000000002 19.400000000000002 C21.400000000000002 21.2 20.2 25.8 15.8 26.6 C12.8 27.200000000000003 10.200000000000001 26.6 8.0 24.8 C11.200000000000001 25.200000000000003 12.4 23.8 13.4 21.8 C14.4 19.6 17.2 17.8 19.400000000000002 19.400000000000002 Z" fill="#f3f2f1" stroke="#f3f2f1" stroke-width="3"/><path d="M29.4 7.8 L18.8 19.8" stroke="#f3f2f1" stroke-width="5.2" stroke-linecap="round"/><path d="M29.4 7.8 L18.8 19.8" stroke="#3b3b3b" stroke-width="3.3" stroke-linecap="round"/><path d="M29.299999999999997 7.8999999999999995 L19.2 19.400000000000002" stroke="#fcfcfc" stroke-width="1.5" stroke-linecap="round"/><path d="M19.400000000000002 19.400000000000002 C21.400000000000002 21.2 20.2 25.8 15.8 26.6 C12.8 27.200000000000003 10.200000000000001 26.6 8.0 24.8 C11.200000000000001 25.200000000000003 12.4 23.8 13.4 21.8 C14.4 19.6 17.2 17.8 19.400000000000002 19.400000000000002 Z" fill="#6fb1ea" stroke="#0f6cbd" stroke-width="1" stroke-linejoin="round"/></svg>
<span class="t" style="font-size:12px;color:#444;line-height:16px;height:16px;top:104.60px;left:837.00px;transform-origin:0 50%;transform:scaleX(0.8278);">セルの</span>
<span class="t" style="font-size:12px;color:#444;line-height:16px;height:16px;top:119.20px;left:827.80px;transform-origin:0 50%;transform:scaleX(0.7438);">スタイル</span>
<svg style="left:867.7px;top:125px;" width="8" height="5" viewBox="0 0 8 5"><path d="M1 1 L4.0 4 L7 1" fill="none" stroke="#444" stroke-width="1.1"/></svg>
<span class="t" style="font-size:12px;color:#444;line-height:16px;height:16px;top:145.00px;left:773.70px;transform-origin:0 50%;transform:scaleX(0.7562);">スタイル</span>
<svg style="left:898px;top:71px;" width="16" height="14" viewBox="0 0 16 14"><g shape-rendering="crispEdges"><path d="M0.5 4.5 V0.5 H15.5 V13.5 H0.5 V9.5 M5.5 0.5 V4.5 M10.5 0.5 V4.5 M5.5 9.5 V13.5 M10.5 9.5 V13.5" fill="none" stroke="#3b3b3b"/><rect x="6.5" y="4.5" width="9" height="5" fill="#84bdee"/><path d="M6 4.5 H15.5 M6 9.5 H15.5 M10.5 4.5 V9.5 M15.5 4.5 V9.5" stroke="#0f6cbd"/></g><path d="M0.6 7 H7.4 M3.8 3.6 L0.5 7 L3.8 10.4" fill="none" stroke="#1e8ad6" stroke-width="1.3"/></svg>
<span class="t" style="font-size:12px;color:#444;line-height:16px;height:16px;top:71.00px;left:917.20px;transform-origin:0 50%;transform:scaleX(0.9792);">挿入</span>
<svg style="left:950.6px;top:75.9px;" width="8" height="5" viewBox="0 0 8 5"><path d="M1 1 L4.0 4 L7 1" fill="none" stroke="#444" stroke-width="1.1"/></svg>
<svg style="left:898px;top:94px;" width="16" height="14" viewBox="0 0 16 14"><g shape-rendering="crispEdges"><path d="M0.5 4 V0.5 H15.5 V4 M0.5 10 V13.5 H15.5 V10 M5.5 0.5 V4 M10.5 0.5 V4 M5.5 10 V13.5 M10.5 10 V13.5" fill="none" stroke="#3b3b3b"/></g><rect x="3.6" y="4.3" width="5.4" height="5.4" fill="#84bdee" stroke="#0f6cbd" stroke-width="1.2"/><path d="M0.2 7 H3.4" stroke="#0f6cbd" stroke-width="1.1"/><path d="M10.3 4.2 L15.6 9.8 M15.6 4.2 L10.3 9.8" stroke="#e8282e" stroke-width="1.3"/></svg>
<span class="t" style="font-size:12px;color:#444;line-height:16px;height:16px;top:94.30px;left:917.20px;transform-origin:0 50%;transform:scaleX(0.9792);">削除</span>
<svg style="left:950.6px;top:98.9px;" width="8" height="5" viewBox="0 0 8 5"><path d="M1 1 L4.0 4 L7 1" fill="none" stroke="#444" stroke-width="1.1"/></svg>
<svg style="left:898px;top:116px;" width="16" height="16" viewBox="0 0 16 16"><g shape-rendering="crispEdges"><path d="M3.5 1.5 H13 M3.5 0 V3 M12.5 0 V3" fill="none" stroke="#1e8ad6"/><path d="M3 2.5 H0.5 V15.5 H15.5 V2.5 H13 M4.5 3 V15.5 M11.5 3 V15.5 M0.5 5.5 H4.5 M11.5 5.5 H15.5 M0.5 11.5 H15.5" fill="none" stroke="#3b3b3b"/><rect x="4.5" y="5.5" width="7" height="6" fill="#84bdee" stroke="#0f6cbd"/></g></svg>
<span class="t" style="font-size:12px;color:#444;line-height:16px;height:16px;top:117.00px;left:917.20px;transform-origin:0 50%;transform:scaleX(0.9792);">書式</span>
<svg style="left:944.7px;top:122.8px;" width="8" height="5" viewBox="0 0 8 5"><path d="M1 1 L4.0 4 L7 1" fill="none" stroke="#444" stroke-width="1.1"/></svg>
<span class="t" style="font-size:12px;color:#444;line-height:16px;height:16px;top:145.00px;left:919.60px;transform-origin:0 50%;transform:scaleX(0.7958);">セル</span>
<svg style="left:984.5px;top:70.5px;" width="14" height="15" viewBox="0 0 14 15"><path d="M12.2 3 V1 H1 L7 7.4 L1 13.8 H12.2 V11.8" fill="none" stroke="#3b3b3b" stroke-width="1.05" stroke-linejoin="miter"/></svg>
<svg style="left:1004.6px;top:75.9px;" width="8" height="5" viewBox="0 0 8 5"><path d="M1 1 L4.0 4 L7 1" fill="none" stroke="#444" stroke-width="1.1"/></svg>
<svg style="left:982.5px;top:93.5px;" width="17" height="15" viewBox="0 0 17 15"><rect x="0.9" y="0.9" width="14.8" height="12.6" fill="#fafafa" stroke="#3b3b3b" stroke-width="1.1"/><path d="M0.9 2.8 H15.7" stroke="#3b3b3b" stroke-width="1"/><path d="M8.3 5 V11.2 M5.6 8.6 L8.3 11.4 L11 8.6" fill="none" stroke="#1e8ad6" stroke-width="1.2"/></svg>
<svg style="left:1002.6px;top:98.9px;" width="8" height="5" viewBox="0 0 8 5"><path d="M1 1 L4.0 4 L7 1" fill="none" stroke="#444" stroke-width="1.1"/></svg>
<svg style="left:982.5px;top:115.5px;" width="17" height="17" viewBox="0 0 17 17"><path d="M10 1 L15.6 6.2 L6.6 15.6 L1 10.4 Z" fill="#fafafa" stroke="#a33fb0" stroke-width="1.3" stroke-linejoin="round"/><path d="M4.6 6.6 L10.2 11.8 L6.6 15.6 L1 10.4 Z" fill="#c77fd0" stroke="#a33fb0" stroke-width="1.3" stroke-linejoin="round"/></svg>
<svg style="left:1002.6px;top:122.8px;" width="8" height="5" viewBox="0 0 8 5"><path d="M1 1 L4.0 4 L7 1" fill="none" stroke="#444" stroke-width="1.1"/></svg>
<span class="t" style="font-size:15.6px;color:#1e8ad6;line-height:18px;height:18px;top:70.90px;left:1034.40px;transform-origin:0 50%;transform:scaleX(0.8841);">A</span>
<span class="t" style="font-size:15.6px;color:#3b3b3b;line-height:18px;height:18px;top:85.30px;left:1034.40px;transform-origin:0 50%;transform:scaleX(0.9443);">Z</span>
<svg style="left:1045.5px;top:78.5px;" width="18" height="17" viewBox="0 0 18 17"><path d="M0.8 1 H16.4 V3 L10.4 9 V15.6 H6.8 V9 L0.8 3 Z" fill="#fafafa" stroke="#3b3b3b" stroke-width="1.1" stroke-linejoin="round"/></svg>
<span class="t" style="font-size:12px;color:#444;line-height:16px;height:16px;top:104.60px;left:1022.50px;transform-origin:0 50%;transform:scaleX(0.8367);">並べ替えと</span>
<span class="t" style="font-size:12px;color:#444;line-height:16px;height:16px;top:119.20px;left:1020.60px;transform-origin:0 50%;transform:scaleX(0.6817);">フィルター</span>
<svg style="left:1066.7px;top:125px;" width="8" height="5" viewBox="0 0 8 5"><path d="M1 1 L4.0 4 L7 1" fill="none" stroke="#444" stroke-width="1.1"/></svg>
<svg style="left:1083px;top:71px;" width="31" height="31" viewBox="0 0 31 31"><circle cx="19.3" cy="11.5" r="10.2" fill="#fafafa" stroke="#3b3b3b" stroke-width="1.1"/><path d="M12.2 18.8 L1 29.8" stroke="#3b3b3b" stroke-width="1.2"/></svg>
<span class="t" style="font-size:12px;color:#444;line-height:16px;height:16px;top:104.60px;left:1083.20px;transform-origin:0 50%;transform:scaleX(0.8806);">検索と</span>
<span class="t" style="font-size:12px;color:#444;line-height:16px;height:16px;top:119.20px;left:1081.20px;transform-origin:0 50%;transform:scaleX(0.9625);">選択</span>
<svg style="left:1108.6px;top:125px;" width="8" height="5" viewBox="0 0 8 5"><path d="M1 1 L4.0 4 L7 1" fill="none" stroke="#444" stroke-width="1.1"/></svg>
<span class="t" style="font-size:12px;color:#444;line-height:16px;height:16px;top:145.00px;left:1037.00px;transform-origin:0 50%;transform:scaleX(0.9917);">編集</span>
<svg style="left:1146px;top:71.5px;" width="23" height="29" viewBox="0 0 23 29"><path d="M7.1 0.8 H19.7 L13.7 13 H21.7 L2.3 28.1 L9.1 16.3 H0.5 Z" fill="#84bdee" stroke="#1470c6" stroke-width="1.3" stroke-linejoin="round"/></svg>
<span class="t" style="font-size:12px;color:#444;line-height:16px;height:16px;top:104.60px;left:1148.50px;transform-origin:0 50%;transform:scaleX(0.7167);">アイ</span>
<span class="t" style="font-size:12px;color:#444;line-height:16px;height:16px;top:119.20px;left:1148.50px;transform-origin:0 50%;transform:scaleX(0.7167);">デア</span>
<span class="t" style="font-size:12px;color:#444;line-height:16px;height:16px;top:145.00px;left:1138.60px;transform-origin:0 50%;transform:scaleX(0.7458);">アイデア</span>
<svg style="left:1203.5px;top:70px;" width="28" height="31" viewBox="0 0 28 31"><rect x="0.8" y="2.4" width="19.6" height="27.4" fill="#ebeae9" stroke="#b9b7b5" stroke-width="1.1"/><g transform="translate(14.2 13.6) rotate(-45)"><rect x="-9.4" y="-3.4" width="12.4" height="6.8" fill="#ebeae9" stroke="#b9b7b5" stroke-width="1.1"/><rect x="-6.6" y="-1.2" width="7.6" height="2.4" fill="none" stroke="#b9b7b5" stroke-width="0.9"/><rect x="3.6" y="-5.2" width="3" height="10.4" fill="#b9b7b5"/><rect x="7.4" y="-5" width="4.6" height="10" fill="#f3f2f1" stroke="#b9b7b5" stroke-width="1.1"/><rect x="12" y="-3" width="4.4" height="6" fill="#f3f2f1" stroke="#b9b7b5" stroke-width="1.1"/></g></svg>
<span class="t" style="font-size:12px;color:#a8a6a4;line-height:16px;height:16px;top:104.60px;left:1202.80px;transform-origin:0 50%;transform:scaleX(0.9875);">秘密</span>
<span class="t" style="font-size:12px;color:#a8a6a4;line-height:16px;height:16px;top:119.20px;left:1202.80px;transform-origin:0 50%;transform:scaleX(0.9833);">度</span>
<svg style="left:1219px;top:125px;" width="8" height="5" viewBox="0 0 8 5"><path d="M1 1 L4.0 4 L7 1" fill="none" stroke="#a8a6a4" stroke-width="1.1"/></svg>
<span class="t" style="font-size:12px;color:#444;line-height:16px;height:16px;top:145.00px;left:1195.90px;transform-origin:0 50%;transform:scaleX(0.9889);">秘密度</span>
<svg style="left:1345.5px;top:150.5px;" width="13" height="8" viewBox="0 0 13 8"><path d="M0.8 6.8 L6.5 1.2 L12.2 6.8" fill="none" stroke="#444" stroke-width="1.3"/></svg>
<div style="left:5px;top:172px;width:102px;height:31px;background:#fff;border:1px solid #c6c6c6;"></div>
<span class="t" style="font-size:14.67px;color:#444;line-height:16px;height:16px;top:181.60px;left:12.60px;transform-origin:0 50%;transform:scaleX(0.9173);">C3</span>
<svg style="left:93px;top:185px;" width="8" height="5" viewBox="0 0 8 5"><path d="M0 0 H7.4 L3.7 4.2 Z" fill="#777"/></svg>
<div style="left:121px;top:182px;width:2px;height:2px;background:#b8b8b8;"></div>
<div style="left:121px;top:186.2px;width:2px;height:2px;background:#b8b8b8;"></div>
<div style="left:121px;top:190.4px;width:2px;height:2px;background:#b8b8b8;"></div>
<div style="left:137px;top:172px;width:110px;height:31px;background:#fff;border:1px solid #c6c6c6;"></div>
<svg style="left:150px;top:181px;" width="13" height="13" viewBox="0 0 13 13"><path d="M1 1 L11 11 M11 1 L1 11" stroke="#b4b4b4" stroke-width="1.3"/></svg>
<svg style="left:185px;top:181px;" width="15" height="13" viewBox="0 0 15 13"><path d="M1.2 7 L5 11 L13 1.5" fill="none" stroke="#b4b4b4" stroke-width="2"/></svg>
<span class="t" style="left:222.5px;top:177.5px;font-family:'Liberation Serif',serif;font-style:italic;font-size:15px;line-height:18px;color:#555;font-weight:bold;letter-spacing:-0.5px;">f<span style="font-size:10px;font-weight:bold;">x</span></span>
<div style="left:250px;top:172px;width:1111px;height:31px;background:#fff;border:1px solid #c6c6c6;"></div>
<span class="t" style="font-size:14.67px;color:#404040;line-height:16px;height:16px;top:179.20px;left:263.60px;transform-origin:0 50%;transform:scaleX(1.0225);">=VLOOKUP(B3,</span>
<span class="t" style="font-size:14.67px;color:#404040;line-height:16px;height:16px;top:179.20px;left:374.50px;transform-origin:0 50%;transform:scaleX(1.0143);">商品カタログ表</span>
<span class="t" style="font-size:14.67px;color:#404040;line-height:16px;height:16px;top:179.20px;left:481.80px;transform-origin:0 50%;transform:scaleX(1.0035);">!$A$4:$C$12,2,FALSE)</span>
<svg style="left:1348.5px;top:184.2px;" width="9" height="6" viewBox="0 0 9 6"><path d="M0.8 0.8 L4.1 4.1 L7.4 0.8" fill="none" stroke="#666" stroke-width="1.7"/></svg>
<div style="left:29px;top:238px;width:1315px;height:440px;background:#fff;"></div>
<div style="left:0px;top:205px;width:1366px;height:32px;background:#e6e6e6;"></div>
<div style="left:0px;top:238px;width:28px;height:440px;background:#e6e6e6;"></div>
<svg style="left:8px;top:217px;" width="18" height="18" viewBox="0 0 18 18"><path d="M17 0.5 V17 H0.5 Z" fill="#b9b9b9"/></svg>
<div style="left:192px;top:213px;width:219px;height:24px;background:#d2d2d2;"></div>
<div style="left:0px;top:288px;width:28px;height:24px;background:#d2d2d2;"></div>
<div style="left:28px;top:213px;width:1px;height:25px;background:#9f9f9f;"></div>
<div style="left:119px;top:213px;width:1px;height:24px;background:#9f9f9f;"></div>
<span class="t" style="font-size:14.67px;color:#262626;line-height:16px;height:16px;top:216.80px;left:54.00px;width:40.00px;text-align:center;">A</span>
<div style="left:191px;top:213px;width:1px;height:24px;background:#9f9f9f;"></div>
<span class="t" style="font-size:14.67px;color:#262626;line-height:16px;height:16px;top:216.80px;left:135.50px;width:40.00px;text-align:center;">B</span>
<div style="left:411px;top:213px;width:1px;height:24px;background:#9f9f9f;"></div>
<span class="t" style="font-size:14.67px;color:#217346;line-height:16px;height:16px;top:216.80px;left:281.50px;width:40.00px;text-align:center;">C</span>
<div style="left:510px;top:213px;width:1px;height:24px;background:#9f9f9f;"></div>
<span class="t" style="font-size:14.67px;color:#262626;line-height:16px;height:16px;top:216.80px;left:441.00px;width:40.00px;text-align:center;">D</span>
<div style="left:609px;top:213px;width:1px;height:24px;background:#9f9f9f;"></div>
<span class="t" style="font-size:14.67px;color:#262626;line-height:16px;height:16px;top:216.80px;left:540.00px;width:40.00px;text-align:center;">E</span>
<div style="left:708px;top:213px;width:1px;height:24px;background:#9f9f9f;"></div>
<span class="t" style="font-size:14.67px;color:#262626;line-height:16px;height:16px;top:216.80px;left:639.00px;width:40.00px;text-align:center;">F</span>
<div style="left:974px;top:213px;width:1px;height:24px;background:#9f9f9f;"></div>
<span class="t" style="font-size:14.67px;color:#262626;line-height:16px;height:16px;top:216.80px;left:821.50px;width:40.00px;text-align:center;">G</span>
<div style="left:1065px;top:213px;width:1px;height:24px;background:#9f9f9f;"></div>
<span class="t" style="font-size:14.67px;color:#262626;line-height:16px;height:16px;top:216.80px;left:1000.00px;width:40.00px;text-align:center;">H</span>
<div style="left:1137px;top:213px;width:1px;height:24px;background:#9f9f9f;"></div>
<span class="t" style="font-size:14.67px;color:#262626;line-height:16px;height:16px;top:216.80px;left:1081.50px;width:40.00px;text-align:center;">I</span>
<div style="left:1209px;top:213px;width:1px;height:24px;background:#9f9f9f;"></div>
<span class="t" style="font-size:14.67px;color:#262626;line-height:16px;height:16px;top:216.80px;left:1153.50px;width:40.00px;text-align:center;">J</span>
<div style="left:1281px;top:213px;width:1px;height:24px;background:#9f9f9f;"></div>
<span class="t" style="font-size:14.67px;color:#262626;line-height:16px;height:16px;top:216.80px;left:1225.50px;width:40.00px;text-align:center;">K</span>
<span class="t" style="font-size:14.67px;color:#262626;line-height:16px;height:16px;top:216.80px;left:1297.50px;width:40.00px;text-align:center;">L</span>
<div style="left:0px;top:237px;width:1345px;height:1px;background:#9f9f9f;"></div>
<div style="left:192px;top:236px;width:219px;height:2px;background:#217346;"></div>
<div style="left:28px;top:238px;width:1px;height:440px;background:#9f9f9f;"></div>
<div style="left:0px;top:262px;width:28px;height:1px;background:#bdbdbd;"></div>
<div style="left:0;top:238px;width:28px;height:24px;overflow:hidden;"><span class="t" style="left:0;width:28px;text-align:center;top:0.2px;font-size:14.67px;line-height:24px;color:#262626;">1</span></div>
<div style="left:0px;top:287px;width:28px;height:1px;background:#bdbdbd;"></div>
<div style="left:0;top:263px;width:28px;height:24px;overflow:hidden;"><span class="t" style="left:0;width:28px;text-align:center;top:0.2px;font-size:14.67px;line-height:24px;color:#262626;">2</span></div>
<div style="left:0px;top:312px;width:28px;height:1px;background:#bdbdbd;"></div>
<div style="left:0;top:288px;width:28px;height:24px;overflow:hidden;"><span class="t" style="left:0;width:28px;text-align:center;top:0.2px;font-size:14.67px;line-height:24px;color:#217346;">3</span></div>
<div style="left:0px;top:337px;width:28px;height:1px;background:#bdbdbd;"></div>
<div style="left:0;top:313px;width:28px;height:24px;overflow:hidden;"><span class="t" style="left:0;width:28px;text-align:center;top:0.2px;font-size:14.67px;line-height:24px;color:#262626;">4</span></div>
<div style="left:0px;top:362px;width:28px;height:1px;background:#bdbdbd;"></div>
<div style="left:0;top:338px;width:28px;height:24px;overflow:hidden;"><span class="t" style="left:0;width:28px;text-align:center;top:0.2px;font-size:14.67px;line-height:24px;color:#262626;">5</span></div>
<div style="left:0px;top:387px;width:28px;height:1px;background:#bdbdbd;"></div>
<div style="left:0;top:363px;width:28px;height:24px;overflow:hidden;"><span class="t" style="left:0;width:28px;text-align:center;top:0.2px;font-size:14.67px;line-height:24px;color:#262626;">6</span></div>
<div style="left:0px;top:412px;width:28px;height:1px;background:#bdbdbd;"></div>
<div style="left:0;top:388px;width:28px;height:24px;overflow:hidden;"><span class="t" style="left:0;width:28px;text-align:center;top:0.2px;font-size:14.67px;line-height:24px;color:#262626;">7</span></div>
<div style="left:0px;top:437px;width:28px;height:1px;background:#bdbdbd;"></div>
<div style="left:0;top:413px;width:28px;height:24px;overflow:hidden;"><span class="t" style="left:0;width:28px;text-align:center;top:0.2px;font-size:14.67px;line-height:24px;color:#262626;">8</span></div>
<div style="left:0px;top:462px;width:28px;height:1px;background:#bdbdbd;"></div>
<div style="left:0;top:438px;width:28px;height:24px;overflow:hidden;"><span class="t" style="left:0;width:28px;text-align:center;top:0.2px;font-size:14.67px;line-height:24px;color:#262626;">9</span></div>
<div style="left:0px;top:487px;width:28px;height:1px;background:#bdbdbd;"></div>
<div style="left:0;top:463px;width:28px;height:24px;overflow:hidden;"><span class="t" style="left:0;width:28px;text-align:center;top:0.2px;font-size:14.67px;line-height:24px;color:#262626;">10</span></div>
<div style="left:0px;top:512px;width:28px;height:1px;background:#bdbdbd;"></div>
<div style="left:0;top:488px;width:28px;height:24px;overflow:hidden;"><span class="t" style="left:0;width:28px;text-align:center;top:0.2px;font-size:14.67px;line-height:24px;color:#262626;">11</span></div>
<div style="left:0px;top:537px;width:28px;height:1px;background:#bdbdbd;"></div>
<div style="left:0;top:513px;width:28px;height:24px;overflow:hidden;"><span class="t" style="left:0;width:28px;text-align:center;top:0.2px;font-size:14.67px;line-height:24px;color:#262626;">12</span></div>
<div style="left:0px;top:562px;width:28px;height:1px;background:#bdbdbd;"></div>
<div style="left:0;top:538px;width:28px;height:24px;overflow:hidden;"><span class="t" style="left:0;width:28px;text-align:center;top:0.2px;font-size:14.67px;line-height:24px;color:#262626;">13</span></div>
<div style="left:0px;top:587px;width:28px;height:1px;background:#bdbdbd;"></div>
<div style="left:0;top:563px;width:28px;height:24px;overflow:hidden;"><span class="t" style="left:0;width:28px;text-align:center;top:0.2px;font-size:14.67px;line-height:24px;color:#262626;">14</span></div>
<div style="left:0px;top:612px;width:28px;height:1px;background:#bdbdbd;"></div>
<div style="left:0;top:588px;width:28px;height:24px;overflow:hidden;"><span class="t" style="left:0;width:28px;text-align:center;top:0.2px;font-size:14.67px;line-height:24px;color:#262626;">15</span></div>
<div style="left:0px;top:637px;width:28px;height:1px;background:#bdbdbd;"></div>
<div style="left:0;top:613px;width:28px;height:24px;overflow:hidden;"><span class="t" style="left:0;width:28px;text-align:center;top:0.2px;font-size:14.67px;line-height:24px;color:#262626;">16</span></div>
<div style="left:0px;top:662px;width:28px;height:1px;background:#bdbdbd;"></div>
<div style="left:0;top:638px;width:28px;height:24px;overflow:hidden;"><span class="t" style="left:0;width:28px;text-align:center;top:0.2px;font-size:14.67px;line-height:24px;color:#262626;">17</span></div>
<div style="left:0;top:663px;width:28px;height:15px;overflow:hidden;"><span class="t" style="left:0;width:28px;text-align:center;top:0.2px;font-size:14.67px;line-height:24px;color:#262626;">18</span></div>
<div style="left:119px;top:238px;width:1px;height:440px;background:#d4d4d4;"></div>
<div style="left:191px;top:238px;width:1px;height:440px;background:#d4d4d4;"></div>
<div style="left:411px;top:238px;width:1px;height:440px;background:#d4d4d4;"></div>
<div style="left:510px;top:238px;width:1px;height:440px;background:#d4d4d4;"></div>
<div style="left:609px;top:238px;width:1px;height:440px;background:#d4d4d4;"></div>
<div style="left:708px;top:238px;width:1px;height:440px;background:#d4d4d4;"></div>
<div style="left:974px;top:238px;width:1px;height:440px;background:#d4d4d4;"></div>
<div style="left:1065px;top:238px;width:1px;height:440px;background:#d4d4d4;"></div>
<div style="left:1137px;top:238px;width:1px;height:440px;background:#d4d4d4;"></div>
<div style="left:1209px;top:238px;width:1px;height:440px;background:#d4d4d4;"></div>
<div style="left:1281px;top:238px;width:1px;height:440px;background:#d4d4d4;"></div>
<div style="left:29px;top:262px;width:1315px;height:1px;background:#d4d4d4;"></div>
<div style="left:29px;top:287px;width:1315px;height:1px;background:#d4d4d4;"></div>
<div style="left:29px;top:312px;width:1315px;height:1px;background:#d4d4d4;"></div>
<div style="left:29px;top:337px;width:1315px;height:1px;background:#d4d4d4;"></div>
<div style="left:29px;top:362px;width:1315px;height:1px;background:#d4d4d4;"></div>
<div style="left:29px;top:387px;width:1315px;height:1px;background:#d4d4d4;"></div>
<div style="left:29px;top:412px;width:1315px;height:1px;background:#d4d4d4;"></div>
<div style="left:29px;top:437px;width:1315px;height:1px;background:#d4d4d4;"></div>
<div style="left:29px;top:462px;width:1315px;height:1px;background:#d4d4d4;"></div>
<div style="left:29px;top:487px;width:1315px;height:1px;background:#d4d4d4;"></div>
<div style="left:29px;top:512px;width:1315px;height:1px;background:#d4d4d4;"></div>
<div style="left:29px;top:537px;width:1315px;height:1px;background:#d4d4d4;"></div>
<div style="left:29px;top:562px;width:1315px;height:1px;background:#d4d4d4;"></div>
<div style="left:29px;top:587px;width:1315px;height:1px;background:#d4d4d4;"></div>
<div style="left:29px;top:612px;width:1315px;height:1px;background:#d4d4d4;"></div>
<div style="left:29px;top:637px;width:1315px;height:1px;background:#d4d4d4;"></div>
<div style="left:29px;top:662px;width:1315px;height:1px;background:#d4d4d4;"></div>
<div style="left:1344px;top:237px;width:1px;height:442px;background:#9f9f9f;"></div>
<div style="left:29px;top:263px;width:1036px;height:24px;background:#ffe699;"></div>
<div style="left:28px;top:262px;width:1038px;height:1px;background:#000;"></div>
<div style="left:28px;top:287px;width:1038px;height:1px;background:#000;"></div>
<div style="left:28px;top:312px;width:1038px;height:1px;background:#000;"></div>
<div style="left:28px;top:337px;width:1038px;height:1px;background:#000;"></div>
<div style="left:28px;top:362px;width:1038px;height:1px;background:#000;"></div>
<div style="left:28px;top:387px;width:1038px;height:1px;background:#000;"></div>
<div style="left:28px;top:412px;width:1038px;height:1px;background:#000;"></div>
<div style="left:28px;top:262px;width:1px;height:151px;background:#000;"></div>
<div style="left:119px;top:262px;width:1px;height:151px;background:#000;"></div>
<div style="left:191px;top:262px;width:1px;height:151px;background:#000;"></div>
<div style="left:411px;top:262px;width:1px;height:151px;background:#000;"></div>
<div style="left:510px;top:262px;width:1px;height:151px;background:#000;"></div>
<div style="left:609px;top:262px;width:1px;height:151px;background:#000;"></div>
<div style="left:708px;top:262px;width:1px;height:151px;background:#000;"></div>
<div style="left:974px;top:262px;width:1px;height:151px;background:#000;"></div>
<div style="left:1065px;top:262px;width:1px;height:151px;background:#000;"></div>
<div style="left:27px;top:288px;width:2px;height:24px;background:#217346;"></div>
<div class="c" style="left:29px;top:238.1px;width:90px;text-align:left;padding-left:2.5px;font-weight:bold;overflow:visible;">納品管理表</div>
<div class="c" style="left:29px;top:263.1px;width:90px;text-align:center;">注文日</div>
<div class="c" style="left:120px;top:263.1px;width:71px;text-align:center;">商品番号</div>
<div class="c" style="left:192px;top:263.1px;width:219px;text-align:center;">商品名</div>
<div class="c" style="left:412px;top:263.1px;width:98px;text-align:center;">単価</div>
<div class="c" style="left:511px;top:263.1px;width:98px;text-align:center;">個数</div>
<div class="c" style="left:610px;top:263.1px;width:98px;text-align:center;">合計</div>
<div class="c" style="left:709px;top:263.1px;width:265px;text-align:center;">発送先住所</div>
<div class="c" style="left:975px;top:263.1px;width:90px;text-align:center;">発送予定日</div>
<div class="c" style="left:29px;top:288.1px;width:90px;text-align:right;padding-right:2px;letter-spacing:0.55px;">2019/11/2</div>
<div class="c" style="left:120px;top:288.1px;width:71px;text-align:left;padding-left:2.5px;">A101</div>
<div class="c" style="left:192px;top:288.1px;width:219px;text-align:left;padding-left:2.5px;letter-spacing:0.1px;">六角レンチ</div>
<div class="c" style="left:412px;top:288.1px;width:98px;text-align:right;padding-right:2px;">¥1,820</div>
<div class="c" style="left:511px;top:288.1px;width:98px;text-align:right;padding-right:2px;">9</div>
<div class="c" style="left:610px;top:288.1px;width:98px;text-align:right;padding-right:2px;">¥16,380</div>
<div class="c" style="left:709px;top:288.1px;width:265px;text-align:left;padding-left:2.5px;letter-spacing:0.1px;">神奈川県川崎市XXX</div>
<div class="c" style="left:975px;top:288.1px;width:90px;text-align:right;padding-right:2px;letter-spacing:0.55px;">2019/11/8</div>
<div class="c" style="left:29px;top:313.1px;width:90px;text-align:right;padding-right:2px;letter-spacing:0.55px;">2019/11/5</div>
<div class="c" style="left:120px;top:313.1px;width:71px;text-align:left;padding-left:2.5px;">A102</div>
<div class="c" style="left:192px;top:313.1px;width:219px;text-align:left;padding-left:2.5px;letter-spacing:0.1px;">パイプレンチ</div>
<div class="c" style="left:412px;top:313.1px;width:98px;text-align:right;padding-right:2px;">¥20,000</div>
<div class="c" style="left:511px;top:313.1px;width:98px;text-align:right;padding-right:2px;">30</div>
<div class="c" style="left:610px;top:313.1px;width:98px;text-align:right;padding-right:2px;">¥600,000</div>
<div class="c" style="left:709px;top:313.1px;width:265px;text-align:left;padding-left:2.5px;letter-spacing:0.1px;">神奈川県横浜市XXX</div>
<div class="c" style="left:975px;top:313.1px;width:90px;text-align:right;padding-right:2px;letter-spacing:0.55px;">2019/11/9</div>
<div class="c" style="left:29px;top:338.1px;width:90px;text-align:right;padding-right:2px;letter-spacing:0.55px;">2019/11/16</div>
<div class="c" style="left:120px;top:338.1px;width:71px;text-align:left;padding-left:2.5px;">A105</div>
<div class="c" style="left:192px;top:338.1px;width:219px;text-align:left;padding-left:2.5px;letter-spacing:0.1px;">スパナ</div>
<div class="c" style="left:412px;top:338.1px;width:98px;text-align:right;padding-right:2px;">¥1,100</div>
<div class="c" style="left:511px;top:338.1px;width:98px;text-align:right;padding-right:2px;">12</div>
<div class="c" style="left:610px;top:338.1px;width:98px;text-align:right;padding-right:2px;">¥13,200</div>
<div class="c" style="left:709px;top:338.1px;width:265px;text-align:left;padding-left:2.5px;letter-spacing:0.1px;">東京都文京区XXX</div>
<div class="c" style="left:975px;top:338.1px;width:90px;text-align:right;padding-right:2px;letter-spacing:0.55px;">2019/11/19</div>
<div class="c" style="left:29px;top:363.1px;width:90px;text-align:right;padding-right:2px;letter-spacing:0.55px;">2019/11/21</div>
<div class="c" style="left:120px;top:363.1px;width:71px;text-align:left;padding-left:2.5px;">C101</div>
<div class="c" style="left:192px;top:363.1px;width:219px;text-align:left;padding-left:2.5px;letter-spacing:0.1px;">電動ドリル</div>
<div class="c" style="left:412px;top:363.1px;width:98px;text-align:right;padding-right:2px;">¥8,870</div>
<div class="c" style="left:511px;top:363.1px;width:98px;text-align:right;padding-right:2px;">22</div>
<div class="c" style="left:610px;top:363.1px;width:98px;text-align:right;padding-right:2px;">¥195,140</div>
<div class="c" style="left:709px;top:363.1px;width:265px;text-align:left;padding-left:2.5px;letter-spacing:0.1px;">東京都杉並区XXX</div>
<div class="c" style="left:975px;top:363.1px;width:90px;text-align:right;padding-right:2px;letter-spacing:0.55px;">2019/11/25</div>
<div class="c" style="left:29px;top:388.1px;width:90px;text-align:right;padding-right:2px;letter-spacing:0.55px;">2019/11/26</div>
<div class="c" style="left:120px;top:388.1px;width:71px;text-align:left;padding-left:2.5px;">C102</div>
<div class="c" style="left:192px;top:388.1px;width:219px;text-align:left;padding-left:2.5px;letter-spacing:0.1px;">ジグソー</div>
<div class="c" style="left:412px;top:388.1px;width:98px;text-align:right;padding-right:2px;">¥25,600</div>
<div class="c" style="left:511px;top:388.1px;width:98px;text-align:right;padding-right:2px;">42</div>
<div class="c" style="left:610px;top:388.1px;width:98px;text-align:right;padding-right:2px;">¥1,075,200</div>
<div class="c" style="left:709px;top:388.1px;width:265px;text-align:left;padding-left:2.5px;letter-spacing:0.1px;">埼玉県さいたま市XXX</div>
<div class="c" style="left:975px;top:388.1px;width:90px;text-align:right;padding-right:2px;letter-spacing:0.55px;">2019/11/30</div>
<div style="left:1348px;top:215px;width:15px;height:15px;background:#fff;border:1px solid #ababab;"></div>
<svg style="left:1352px;top:219.6px;" width="7" height="5" viewBox="0 0 7 5"><path d="M0 4.4 H7 L3.5 0.4 Z" fill="#777"/></svg>
<div style="left:1348px;top:230px;width:15px;height:368px;background:#fff;border:1px solid #ababab;"></div>
<div style="left:1348px;top:598px;width:15px;height:66px;background:#dadada;"></div>
<div style="left:1348px;top:664px;width:15px;height:15px;background:#fff;border:1px solid #c8c8c8;"></div>
<svg style="left:1352px;top:669.6px;" width="7" height="5" viewBox="0 0 7 5"><path d="M0 0.4 H7 L3.5 4.4 Z" fill="#777"/></svg>
<div style="left:0px;top:678px;width:1366px;height:29px;background:#e6e6e6;"></div>
<div style="left:0px;top:678px;width:100px;height:1px;background:#9f9f9f;"></div>
<div style="left:190px;top:678px;width:1155px;height:1px;background:#9f9f9f;"></div>
<svg style="left:26.5px;top:688.5px;" width="5" height="7" viewBox="0 0 5 7"><path d="M4.6 0 V6.6 L0.4 3.3 Z" fill="#c3c3c3"/></svg>
<svg style="left:56px;top:688.5px;" width="5" height="7" viewBox="0 0 5 7"><path d="M0.4 0 V6.6 L4.6 3.3 Z" fill="#c3c3c3"/></svg>
<div style="left:100px;top:678px;width:90px;height:25px;background:#fff;"></div>
<div style="left:100px;top:700.6px;width:90px;height:2.4px;background:#217346;"></div>
<div style="left:100px;top:678px;width:1px;height:23px;background:#b5b5b5;"></div>
<div style="left:189px;top:678px;width:1px;height:25px;background:#9f9f9f;"></div>
<span class="t" style="font-size:13.33px;color:#217346;line-height:16px;height:16px;top:683.20px;left:112.20px;transform-origin:0 50%;transform:scaleX(0.9954);">納品管理表</span>
<span class="t" style="font-size:13.33px;color:#444;line-height:16px;height:16px;top:683.20px;left:203.40px;transform-origin:0 50%;transform:scaleX(0.8330);">商品カタログ表</span>
<div style="left:293px;top:682px;width:1px;height:20px;background:#ababab;"></div>
<svg style="left:326px;top:683.5px;" width="17" height="17" viewBox="0 0 17 17"><circle cx="8.5" cy="8.5" r="7.6" fill="none" stroke="#767676" stroke-width="1.1"/><path d="M8.5 4.8 V12.2 M4.8 8.5 H12.2" stroke="#5e5e5e" stroke-width="1.5"/></svg>
<div style="left:819px;top:687px;width:2px;height:2px;background:#a6a6a6;"></div>
<div style="left:819px;top:691.2px;width:2px;height:2px;background:#a6a6a6;"></div>
<div style="left:819px;top:695.4px;width:2px;height:2px;background:#a6a6a6;"></div>
<div style="left:836px;top:685px;width:15px;height:15px;background:#fff;border:1px solid #ababab;"></div>
<svg style="left:840.5px;top:689px;" width="5" height="7" viewBox="0 0 5 7"><path d="M4.4 0 V7 L0.4 3.5 Z" fill="#666"/></svg>
<div style="left:851px;top:685px;width:435px;height:15px;background:#fff;border:1px solid #ababab;"></div>
<div style="left:1286px;top:685px;width:44px;height:15px;background:#d8d8d8;"></div>
<div style="left:1330px;top:685px;width:15px;height:15px;background:#fff;border:1px solid #c8c8c8;"></div>
<svg style="left:1335.6px;top:689px;" width="5" height="7" viewBox="0 0 5 7"><path d="M0.4 0 V7 L4.4 3.5 Z" fill="#666"/></svg>
<div style="left:0px;top:706px;width:1366px;height:1px;background:#cfcfcf;"></div>
<div style="left:0px;top:707px;width:1366px;height:21px;background:#f3f2f1;"></div>
<span class="t" style="font-size:12px;color:#444;line-height:16px;height:16px;top:708.30px;left:8.40px;transform-origin:0 50%;transform:scaleX(0.9708);">準備完了</span>
<svg style="left:75px;top:711px;" width="15" height="13" viewBox="0 0 15 13"><path d="M0.6 12 V0.6 H13.6 V4" fill="none" stroke="#444" stroke-width="1.1"/><path d="M3 3.4 H11.5 M3 6 H6.4 M3 8.6 H5.4" stroke="#444" stroke-width="1"/><circle cx="10" cy="8.6" r="3.9" fill="none" stroke="#444" stroke-width="1.1"/><circle cx="10" cy="8.6" r="1.7" fill="#444"/></svg>
<div style="left:1060px;top:707px;width:40px;height:21px;background:#c8c6c4;"></div>
<svg style="left:1073px;top:710px;" width="13" height="13" viewBox="0 0 13 13"><rect x="0.6" y="0.6" width="11.8" height="11.8" fill="#d9d9d9" stroke="#262626" stroke-width="1.2"/><path d="M4.5 0.6 V12.4 M8.5 0.6 V12.4 M0.6 4.5 H12.4 M0.6 8.5 H12.4" stroke="#262626" stroke-width="1.2"/></svg>
<svg style="left:1113px;top:710px;" width="14" height="13" viewBox="0 0 14 13"><rect x="0.6" y="0.6" width="12.8" height="11.8" fill="none" stroke="#444" stroke-width="1.1"/><rect x="3.4" y="2.8" width="7.2" height="7.6" fill="none" stroke="#444" stroke-width="1"/><path d="M5 5.2 H9 M5 7.8 H9" stroke="#444" stroke-width="1"/></svg>
<svg style="left:1153px;top:710px;" width="14" height="13" viewBox="0 0 14 13"><rect x="0.6" y="0.6" width="12.8" height="11.8" fill="none" stroke="#444" stroke-width="1.1"/><path d="M4 0.6 V7 M7.8 0.6 V7 H0.6" fill="none" stroke="#444" stroke-width="1.1"/></svg>
<div style="left:1186px;top:716px;width:8px;height:1.3px;background:#444;"></div>
<div style="left:1199px;top:717px;width:100px;height:1px;background:#a0a0a0;"></div>
<div style="left:1247px;top:711px;width:5px;height:11.4px;background:#777;"></div>
<svg style="left:1303.5px;top:712.5px;" width="9" height="9" viewBox="0 0 9 9"><path d="M4.3 0.3 V8.3 M0.3 4.3 H8.3" stroke="#444" stroke-width="1.1"/></svg>
<span class="t" style="font-size:12.4px;color:#444;line-height:16px;height:16px;top:708.60px;left:1325.40px;transform-origin:0 50%;transform:scaleX(1.0094);">100%</span>
<svg style="left:0;top:0;pointer-events:none;" width="1366" height="728" viewBox="0 0 1366 728"><defs><filter id="sh" x="-20%" y="-20%" width="150%" height="160%"><feGaussianBlur in="SourceAlpha" stdDeviation="2.2"/><feOffset dx="2.5" dy="3"/><feComponentTransfer><feFuncA type="linear" slope="0.42"/></feComponentTransfer><feMerge><feMergeNode/><feMergeNode in="SourceGraphic"/></feMerge></filter><filter id="sh2" x="-30%" y="-30%" width="170%" height="170%"><feGaussianBlur in="SourceAlpha" stdDeviation="2"/><feOffset dx="1.5" dy="2"/><feComponentTransfer><feFuncA type="linear" slope="0.3"/></feComponentTransfer><feMerge><feMergeNode/><feMergeNode in="SourceGraphic"/></feMerge></filter></defs><rect x="377.6" y="196.9" width="192.3" height="4.5" fill="#ff0000" filter="url(#sh)"/><path d="M434.2 212.7 L399.1 220.4 L405.3 224.2 L346 275.2 Q343.6 278 347 276.6 L415 236.6 L416.3 244 Z" fill="#ff0000" filter="url(#sh)"/><path fill-rule="evenodd" fill="#ff0000" d="M191.7 283.1 H413.3 A4.6 4.6 0 0 1 417.9 287.7 V311.3 A4.6 4.6 0 0 1 413.3 315.9 H191.7 A4.6 4.6 0 0 1 187.1 311.3 V287.7 A4.6 4.6 0 0 1 191.7 283.1 Z M194 290.1 V308.9 H411.1 V290.1 Z"/><g filter="url(#sh2)"><circle cx="480.6" cy="142.6" r="16.7" fill="none" stroke="#fff" stroke-width="7"/><circle cx="480.6" cy="142.6" r="16.7" fill="none" stroke="#ff0000" stroke-width="1.8"/><path d="M484.3 133 V152 H478.7 V139.6 L474.8 141.2 V137.4 L480.2 133 Z" fill="#ff0000" stroke="#fff" stroke-width="3.6" stroke-linejoin="round" paint-order="stroke"/></g></svg>
</body></html>
